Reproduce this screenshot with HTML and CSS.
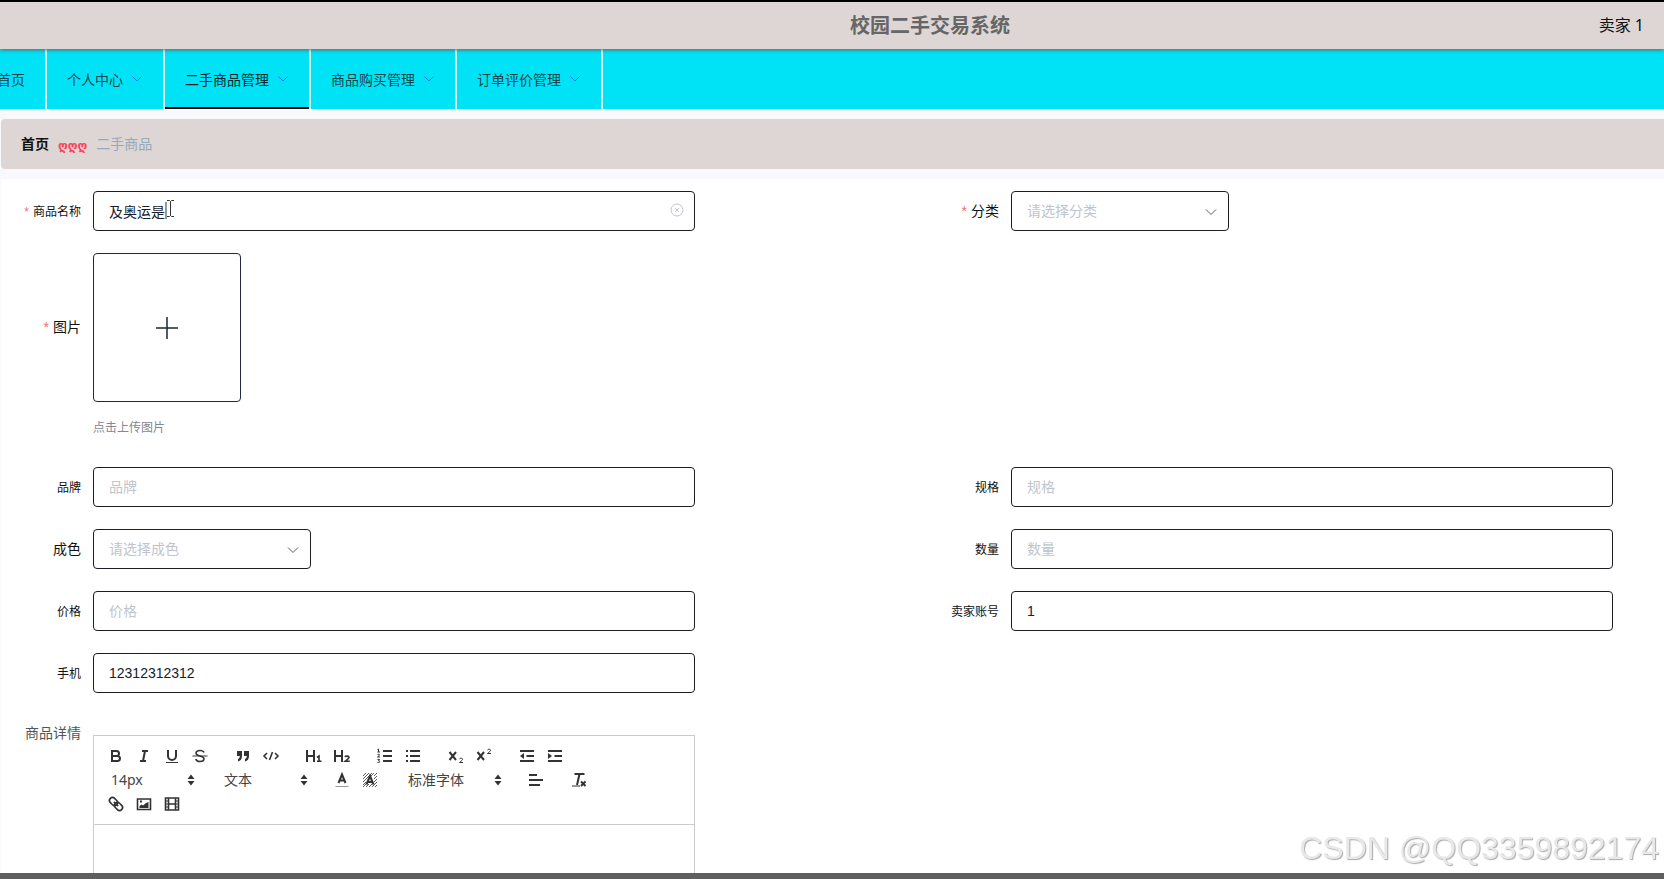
FILE: index.html
```html
<!DOCTYPE html>
<html lang="zh-CN">
<head>
<meta charset="utf-8">
<title>校园二手交易系统</title>
<link rel="stylesheet" href="styles.css">
</head>
<body>
<div class="app">
  <header class="header">
    <h1 class="title">校园二手交易系统</h1>
    <span class="user">卖家 1</span>
  </header>
  <nav class="nav">
    <a class="nav-item" href="#">首页</a>
    <a class="nav-item" href="#">个人中心<svg class="nav-arrow" viewBox="0 0 12 12"><path d="M1.500 3.500 6 8l4.500-4.500"/></svg></a>
    <a class="nav-item active" href="#">二手商品管理<svg class="nav-arrow" viewBox="0 0 12 12"><path d="M1.500 3.500 6 8l4.500-4.500"/></svg></a>
    <a class="nav-item" href="#">商品购买管理<svg class="nav-arrow" viewBox="0 0 12 12"><path d="M1.500 3.500 6 8l4.500-4.500"/></svg></a>
    <a class="nav-item" href="#">订单评价管理<svg class="nav-arrow" viewBox="0 0 12 12"><path d="M1.500 3.500 6 8l4.500-4.500"/></svg></a>
  </nav>
  <div class="breadcrumb">
    <a class="crumb-home" href="#">首页</a>
    <span class="crumb-sep">ღღღ</span>
    <span class="crumb-current">二手商品</span>
  </div>
  <form class="form">
    <div class="field">
      <label class="label small required" for="name">商品名称</label>
      <div class="control">
        <input class="input" id="name" type="text" value="及奥运是">
        <button class="clear" type="button" aria-label="清空"><svg viewBox="0 0 14 14"><circle cx="7" cy="7" r="6"/><path d="m5 5 4 4m0-4-4 4"/></svg></button>
        <svg class="pointer" viewBox="0 0 14 20"><path d="M3 3v17M4 1.500h2.500l1 1 1-1H11M7.500 2.500v14M4 17.500h2.500l1-1 1 1H11"/></svg>
      </div>
    </div>
    <div class="field">
      <label class="label required" for="category">分类</label>
      <div class="control narrow">
        <select class="input" id="category"><option>请选择分类</option></select>
        <svg class="chevron" viewBox="0 0 12 12"><path d="m1 3.500 5 5 5-5"/></svg>
      </div>
    </div>
    <div class="field row-start">
      <label class="label required upload-label" for="picture">图片</label>
      <div class="control">
        <label class="upload">
          <input class="file" id="picture" type="file">
          <svg class="plus" viewBox="0 0 24 24"><path d="M12 1v22M1 12h22"/></svg>
        </label>
        <p class="tip">点击上传图片</p>
      </div>
    </div>
    <div class="field row-start">
      <label class="label small" for="brand">品牌</label>
      <div class="control"><input class="input" id="brand" type="text" placeholder="品牌"></div>
    </div>
    <div class="field">
      <label class="label small" for="spec">规格</label>
      <div class="control"><input class="input" id="spec" type="text" placeholder="规格"></div>
    </div>
    <div class="field">
      <label class="label" for="condition">成色</label>
      <div class="control narrow">
        <select class="input" id="condition"><option>请选择成色</option></select>
        <svg class="chevron" viewBox="0 0 12 12"><path d="m1 3.500 5 5 5-5"/></svg>
      </div>
    </div>
    <div class="field">
      <label class="label small" for="amount">数量</label>
      <div class="control"><input class="input" id="amount" type="text" placeholder="数量"></div>
    </div>
    <div class="field">
      <label class="label small" for="price">价格</label>
      <div class="control"><input class="input" id="price" type="text" placeholder="价格"></div>
    </div>
    <div class="field">
      <label class="label small" for="seller">卖家账号</label>
      <div class="control"><input class="input" id="seller" type="text" value="1"></div>
    </div>
    <div class="field row-start">
      <label class="label small" for="phone">手机</label>
      <div class="control"><input class="input" id="phone" type="text" value="12312312312"></div>
    </div>
    <div class="field row-start">
      <label class="label detail-label" for="detail">商品详情</label>
      <div class="control editor">
        <div class="toolbar">
          <div class="group">
            <button class="tool" type="button" aria-label="加粗"><svg viewBox="0 0 18 18"><path d="M5 4h4.500a2.500 2.500 0 0 1 0 5H5zM5 9h5.500a2.500 2.500 0 0 1 0 5H5z"/></svg></button>
            <button class="tool" type="button" aria-label="斜体"><svg viewBox="0 0 18 18"><path d="M7 4h6M5 14h6M8 14l2-10"/></svg></button>
            <button class="tool" type="button" aria-label="下划线"><svg viewBox="0 0 18 18"><path d="M5 3v6a4 4 0 0 0 8 0V3"/><path class="thin" d="M3 15.500h12"/></svg></button>
            <button class="tool" type="button" aria-label="删除线"><svg viewBox="0 0 18 18"><path class="thin" d="M1.500 9h15"/><path class="mid" d="M13 5.500C12.500 4 11 3.500 9 3.500c-3 0-4 1.300-4 2.800C5 8 7 8.500 9 9s4 1 4 2.800c0 1.700-1.500 2.700-4 2.700-2.300 0-3.800-.8-4.200-2.500"/></svg></button>
          </div>
          <div class="group">
            <button class="tool" type="button" aria-label="引用"><svg viewBox="0 0 18 18"><path class="solid" d="M3 4h5v5c0 3-1.500 5-4 5.500V12c1.200-.4 1.800-1.500 1.800-3H3zM10 4h5v5c0 3-1.500 5-4 5.500V12c1.200-.4 1.800-1.500 1.800-3H10z"/></svg></button>
            <button class="tool" type="button" aria-label="代码"><svg viewBox="0 0 18 18"><path class="mid" d="M5 6 2 9l3 3M13 6l3 3-3 3M10.500 5l-3 8"/></svg></button>
          </div>
          <div class="group">
            <button class="tool" type="button" aria-label="标题一"><svg viewBox="0 0 18 18"><path d="M2 3v12M9 3v12M2 9h7"/><path class="mid" d="m12 10.500 2-1.500v5.500M12 14.300h4.500"/></svg></button>
            <button class="tool" type="button" aria-label="标题二"><svg viewBox="0 0 18 18"><path d="M2 3v12M9 3v12M2 9h7"/><path class="mid" d="M12 10c.5-1.200 4-1.200 4 .5 0 1.300-2.500 2.300-4 3.800h4.800"/></svg></button>
          </div>
          <div class="group">
            <button class="tool" type="button" aria-label="有序列表"><svg viewBox="0 0 18 18"><path d="M7 4h9M7 9h9M7 14h9"/><path class="thin" d="m1.500 2.500 1-.500v3M1.500 5h2.500M1.500 7.500c2-.8 2.500.3 1.500 1.200L1.500 10H4M1.500 12.500h2L2.500 14c2 0 1.500 2-1 1.500"/></svg></button>
            <button class="tool" type="button" aria-label="无序列表"><svg viewBox="0 0 18 18"><path d="M6 4h10M6 9h10M6 14h10M2 4h2M2 9h2M2 14h2"/></svg></button>
          </div>
          <div class="group">
            <button class="tool" type="button" aria-label="下标"><svg viewBox="0 0 18 18"><path d="m2.500 5 6.500 8m0-8-6.500 8"/><path class="thin" d="M12.500 12c.5-1.200 3.500-1 3 .6-.3 1-2 1.600-3 2.900H16"/></svg></button>
            <button class="tool" type="button" aria-label="上标"><svg viewBox="0 0 18 18"><path d="m2.500 5 6.500 8m0-8-6.500 8"/><path class="thin" d="M12.500 3c.5-1.200 3.500-1 3 .6-.3 1-2 1.600-3 2.900H16"/></svg></button>
          </div>
          <div class="group">
            <button class="tool" type="button" aria-label="减少缩进"><svg viewBox="0 0 18 18"><path d="M2 4h14M2 14h14M8.500 9H16"/><path class="solid" d="M6 6v6L2 9z"/></svg></button>
            <button class="tool" type="button" aria-label="增加缩进"><svg viewBox="0 0 18 18"><path d="M2 4h14M2 14h14M8.500 9H16"/><path class="solid" d="M2 6v6l4-3z"/></svg></button>
          </div>
          <div class="group picker">
            <select class="picker-select" aria-label="字号"><option>14px</option></select>
            <svg class="picker-arrow" viewBox="0 0 18 18"><path class="solid" d="M5.500 8 9 3.500 12.500 8zM5.500 10 9 14.500 12.500 10z"/></svg>
          </div>
          <div class="group picker">
            <select class="picker-select" aria-label="段落格式"><option>文本</option></select>
            <svg class="picker-arrow" viewBox="0 0 18 18"><path class="solid" d="M5.500 8 9 3.500 12.500 8zM5.500 10 9 14.500 12.500 10z"/></svg>
          </div>
          <div class="group">
            <button class="tool" type="button" aria-label="文字颜色"><svg viewBox="0 0 18 18"><path class="faint" d="M2.500 15.500h13"/><path d="M5.500 12 9 3.500l3.500 8.500M6.500 9.500h5"/></svg></button>
            <button class="tool" type="button" aria-label="背景颜色"><svg viewBox="0 0 18 18"><path class="hatch" d="m2 5 3-3M2 8l6-6M2 11l9-9M2 14l3-3M2 16l4-4M5 16l3-3M8 16l3-3M11 16l5-5M14 16l2-2M10 5l3-3M13 5l3-3M13 8l3-3M13 11l3-3"/><path d="M5.500 13.500 9 5l3.500 8.500M6.500 11h5"/></svg></button>
          </div>
          <div class="group picker font-picker">
            <select class="picker-select" aria-label="字体"><option>标准字体</option></select>
            <svg class="picker-arrow" viewBox="0 0 18 18"><path class="solid" d="M5.500 8 9 3.500 12.500 8zM5.500 10 9 14.500 12.500 10z"/></svg>
          </div>
          <div class="group">
            <button class="tool" type="button" aria-label="对齐"><svg viewBox="0 0 18 18"><path d="M2 4h8M2 9h14M2 14h11"/></svg></button>
          </div>
          <div class="group">
            <button class="tool" type="button" aria-label="清除格式"><svg viewBox="0 0 18 18"><path d="M4.500 3h10M9.500 3 7 14"/><path class="thin" d="M2 15h8"/><path d="m11 10.500 4.500 4.500m0-4.500L11 15"/></svg></button>
          </div>
          <div class="group">
            <button class="tool" type="button" aria-label="链接"><svg viewBox="0 0 18 18"><g transform="rotate(45 9 9)"><rect class="mid" x="1" y="6" width="9" height="6" rx="3"/><rect class="mid" x="8" y="6" width="9" height="6" rx="3"/><path class="mid" d="M6 9h6"/></g></svg></button>
            <button class="tool" type="button" aria-label="图片"><svg viewBox="0 0 18 18"><path class="mid" d="M2.500 4h13v10.500h-13z"/><path class="solid" d="M4.500 13v-2l2-1.500 1.500 1 3-2.500 2.500-1V13zM5 5.500h2v2H5z"/></svg></button>
            <button class="tool" type="button" aria-label="视频"><svg viewBox="0 0 18 18"><path class="mid" d="M2.500 3h13v12h-13zM5.500 3v12M12.500 3v12M5.500 9h7"/><path class="thin" d="M2.500 6h3M2.500 9h3M2.500 12h3M12.500 6h3M12.500 9h3M12.500 12h3"/></svg></button>
          </div>
        </div>
        <textarea class="editor-body" id="detail"></textarea>
      </div>
    </div>
  </form>
</div>
<div class="watermark">CSDN @QQ3359892174</div>
<div class="bottom-bar"></div>
</body>
</html>
```

FILE: styles.css
```css
* {
  box-sizing: border-box;
}

body {
  margin: 0;
  background: #f7f9fc;
  color: #111;
  font-family: "Liberation Sans", "Noto Sans CJK SC", sans-serif;
  font-size: 14px;
}

.app {
  display: flex;
  flex-direction: column;
  height: 100vh;
  overflow: hidden;
  border-top: 2px solid #000;
}

.header {
  position: relative;
  z-index: 1;
  display: grid;
  grid-template-columns: 1fr auto 1fr;
  align-items: center;
  flex: none;
  height: 47px;
  padding: 0 20px 0 216px;
  background: #ded6d4;
  box-shadow: 0 1px 4px rgba(110, 70, 70, 0.8);
}

.title {
  grid-column: 2;
  margin: 0;
  color: #666;
  font-size: 20px;
  line-height: 24px;
}

.user {
  justify-self: end;
  padding-bottom: 4px;
  font-family: "Noto Sans", "Noto Sans CJK SC", sans-serif;
  font-size: 16px;
}

.nav {
  display: flex;
  flex: none;
  height: 60px;
  padding-right: 20px;
  background: #00e3f7;
}

.nav-item {
  display: flex;
  align-items: center;
  gap: 8px;
  flex: none;
  padding: 0 20px;
  border-right: 2px solid #d9f6fa;
  color: #17454c;
  text-decoration: none;
}

.nav-item:first-child {
  margin-left: -23px;
}

.nav-item.active {
  box-shadow: inset 0 -2px #000;
  color: #06282c;
}

.nav-arrow {
  width: 12px;
  height: 12px;
  fill: none;
  stroke: #1078ff;
}

.breadcrumb {
  display: flex;
  align-items: center;
  flex: none;
  height: 50px;
  margin: 10px 0 10px 1px;
  padding: 0 20px 2px;
  border-radius: 4px 0 0 4px;
  background: #ded6d4;
}

.crumb-home {
  color: #111;
  font-weight: bold;
  text-decoration: none;
}

.crumb-sep {
  margin: 0 9px;
  padding-top: 6px;
  color: #ff4058;
  font-family: "DejaVu Sans", sans-serif;
  font-size: 12px;
  font-weight: bold;
}

.crumb-current {
  color: #97a8be;
}

.form {
  display: grid;
  grid-template-columns: 1fr 1fr;
  align-content: start;
  gap: 22px 224px;
  flex: 1;
  min-height: 0;
  margin-left: 1px;
  padding: 12px 51px 0 0;
  background: #fff;
}

.field {
  display: flex;
  align-items: flex-start;
  gap: 12px;
}

.row-start {
  grid-column: 1;
}

.label {
  flex: none;
  width: 80px;
  line-height: 40px;
  text-align: right;
  white-space: nowrap;
}

.small {
  height: 40px;
  font-size: 12px;
  line-height: 42px;
}

.required::before {
  content: "*";
  margin-right: 4px;
  color: #f56c6c;
}

.upload-label {
  line-height: 149px;
}

.detail-label {
  color: #555;
  line-height: 36px;
}

.control {
  position: relative;
  flex: 1;
  min-width: 0;
}

.narrow {
  flex: none;
  width: 218px;
}

.input {
  display: block;
  width: 100%;
  height: 40px;
  padding: 0 15px;
  border: 1px solid #1c1c26;
  border-radius: 4px;
  background: #fff;
  color: #14202e;
  font: inherit;
  outline: none;
  appearance: none;
}

.input::placeholder,
select.input {
  color: #c0c4cc;
}

.clear {
  position: absolute;
  top: 12px;
  right: 11px;
  width: 14px;
  height: 14px;
  padding: 0;
  border: 0;
  background: none;
}

.clear svg {
  display: block;
  fill: none;
  stroke: #c0c4cc;
}

.pointer {
  position: absolute;
  top: 8px;
  left: 70px;
  width: 14px;
  height: 20px;
  fill: none;
  stroke: #333;
}

.chevron {
  position: absolute;
  top: 15px;
  right: 12px;
  width: 12px;
  height: 12px;
  fill: none;
  stroke: #555b66;
  pointer-events: none;
}

.upload {
  display: flex;
  align-items: center;
  justify-content: center;
  width: 148px;
  height: 149px;
  border: 1px solid #1f2a40;
  border-radius: 4px;
}

.file {
  position: absolute;
  width: 1px;
  height: 1px;
  opacity: 0;
}

.plus {
  width: 24px;
  height: 24px;
  fill: none;
  stroke: #1c2536;
  stroke-width: 1.5;
}

.tip {
  margin: 16px 0 7px;
  color: #7f8896;
  font-size: 12px;
  line-height: 20px;
}

.editor {
  margin-top: 20px;
}

.toolbar {
  display: flex;
  flex-wrap: wrap;
  padding: 8px 0 8px 8px;
  border: 1px solid #ccc;
}

.group {
  display: flex;
  margin-right: 15px;
}

.tool {
  width: 28px;
  height: 24px;
  padding: 3px 5px;
  border: 0;
  background: none;
}

.tool svg,
.picker-arrow {
  display: block;
  width: 18px;
  height: 18px;
  fill: none;
  stroke: #333;
  stroke-width: 2;
}

.tool .mid {
  stroke-width: 1.6;
}

.tool .thin {
  stroke-width: 1;
}

.tool .faint {
  stroke: #999;
  stroke-width: 1;
}

.tool .hatch {
  stroke-width: 0.8;
}

.solid {
  fill: #333;
  stroke: none;
}

.picker {
  position: relative;
  width: 98px;
}

.font-picker {
  width: 108px;
}

.picker-select {
  width: 100%;
  height: 24px;
  padding: 0 20px 2px 9px;
  border: 0;
  background: none;
  color: #444;
  font-family: "Noto Sans", "Noto Sans CJK SC", sans-serif;
  font-size: 14px;
  appearance: none;
}

.picker-arrow {
  position: absolute;
  top: 3px;
  right: 0;
  pointer-events: none;
}

.editor-body {
  display: block;
  width: 100%;
  height: 200px;
  border: 1px solid #ccc;
  border-top: 0;
  outline: none;
  resize: none;
}

.watermark {
  position: fixed;
  right: 5px;
  bottom: 13px;
  color: #e8e8e8;
  font-family: "Liberation Sans", sans-serif;
  font-size: 32px;
  line-height: 36px;
  text-shadow: 1px 1px 1px #aaa;
}

.bottom-bar {
  position: fixed;
  right: 0;
  bottom: 0;
  left: 0;
  height: 6px;
  background: #5f5f5f;
}
```
